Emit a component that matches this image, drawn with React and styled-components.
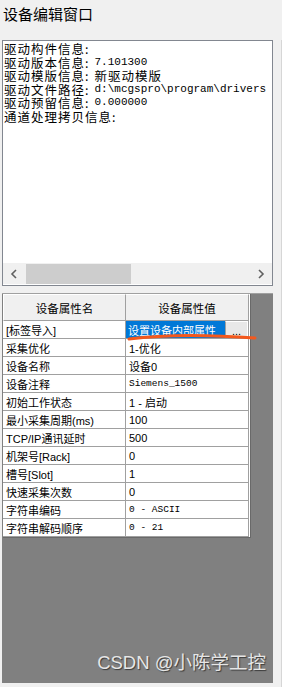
import React from "react";
import styled, { createGlobalStyle } from "styled-components";

// global
const GlobalStyle = createGlobalStyle`
  html, body {
    margin: 0;
    padding: 0;
    background: #f0f0f0;
  }
  body {
    font-family: "Noto Sans CJK SC", "Liberation Sans", sans-serif;
    color: #000;
  }
`;

const cjk = `"Noto Sans CJK SC", sans-serif`;
const mono = `"Liberation Mono", "Noto Sans CJK SC", monospace`;

// styles
const Window = styled.div`
  position: relative;
  display: flex;
  width: 282px;
  height: 687px;
  overflow: hidden;
`;

const Main = styled.div`
  display: flex;
  flex-direction: column;
  width: 274px;
  padding-left: 2px;
`;

const SideStrip = styled.div`
  flex: 1;
  margin-top: 40px;
  margin-left: 6px;
  border-left: 1px solid #d6d6d6;
`;

const Title = styled.div`
  height: 40px;
  flex-shrink: 0;
  padding: 5px 0 0 1px;
  box-sizing: border-box;
  font-size: 15px;
  line-height: 18px;
  font-family: ${cjk};
`;

const InfoBox = styled.div`
  display: flex;
  flex-direction: column;
  flex-shrink: 0;
  height: 246px;
  background: #fff;
  border: 1px solid #828790;
  box-sizing: border-box;
  width: 271px;
`;

const InfoText = styled.div`
  flex: 1;
  padding: 1px 0 0 1px;
  overflow-x: clip;
  overflow-y: visible;
  white-space: nowrap;
`;

const InfoLine = styled.div`
  height: 13.5px;
  display: flex;
  align-items: center;
`;

const InfoLabel = styled.span`
  display: inline-block;
  line-height: 13px;
  font-family: ${cjk};
  font-size: 12.5px;
  letter-spacing: 1px;
`;

const InfoValue = styled.span`
  display: inline-block;
  line-height: 13px;
  padding-left: 5px;
  font-family: ${(p) => (p.cjk ? cjk : mono)};
  font-size: ${(p) => (p.cjk ? "12.5px" : "11px")};
  letter-spacing: ${(p) => (p.cjk ? "1px" : "0")};
`;

const HScroll = styled.div`
  display: flex;
  align-items: center;
  height: 21px;
  background: #f0f0f0;
  margin-bottom: 1px;
`;

const ArrowBtn = styled.div`
  width: 22px;
  height: 21px;
  display: flex;
  align-items: center;
  justify-content: center;
`;

const Track = styled.div`
  flex: 1;
  height: 21px;
  display: flex;
  align-items: center;
`;

const Thumb = styled.div`
  width: 105px;
  height: 20px;
  margin-left: 1px;
  background: #cdcdcd;
`;

const GridArea = styled.div`
  margin-top: 7px;
  flex-shrink: 0;
  width: 271px;
  height: 390px;
  background: #808080;
  border-top: 1px solid #a0a0a0;
  box-sizing: border-box;
`;

const Table = styled.div`
  display: grid;
  grid-template-columns: 123px 123px;
  margin-left: 1px;
  width: 247px;
  background: #fff;
  border-right: 1px solid #696969;
  border-bottom: 1px solid #696969;
`;

const HeadCell = styled.div`
  height: 27px;
  display: flex;
  align-items: center;
  justify-content: center;
  background: #f0f0f0;
  border-right: 1px solid #a0a0a0;
  border-bottom: 1px solid #a0a0a0;
  border-left: ${(p) => (p.first ? "1px solid #fff" : "none")};
  border-top: 1px solid #fff;
  box-sizing: border-box;
  font-size: 11.5px;
  font-family: ${cjk};
`;

const Cell = styled.div`
  height: 18px;
  display: flex;
  align-items: center;
  padding-left: ${(p) => (p.selected ? "0" : "3px")};
  box-sizing: border-box;
  border-right: 1px solid #a0a0a0;
  border-bottom: 1px solid #a0a0a0;
  font-size: ${(p) => (p.mono ? "9.5px" : "11px")};
  font-family: ${(p) => (p.mono ? mono : `"Liberation Sans", ${cjk}`)};
  white-space: pre;
  overflow: hidden;
`;

const SelectedValue = styled.div`
  width: 99px;
  height: 17px;
  display: flex;
  align-items: center;
  padding-left: 2px;
  box-sizing: border-box;
  background: #0078d7;
  color: #fff;
  font-size: 11px;
  font-family: ${cjk};
  white-space: nowrap;
  overflow: hidden;
`;

const MoreBtn = styled.div`
  width: 22px;
  height: 17px;
  display: flex;
  align-items: flex-end;
  justify-content: center;
  background: #e8e8e8;
  border-left: 1px solid #a0a0a0;
  border-top: 1px solid #fff;
  font-size: 11px;
  line-height: 13px;
  font-family: "Liberation Sans", sans-serif;
  box-sizing: border-box;
`;

const Annotation = styled.svg`
  position: absolute;
  left: 0;
  top: 0;
  pointer-events: none;
`;

const Watermark = styled.div`
  position: absolute;
  right: 16px;
  bottom: 13px;
  color: #e6e6e6;
  font-size: 18.5px;
  font-family: "Liberation Sans", ${cjk};
  text-shadow: 1px 1px 1px #3a3a3a;
`;

const info = [
  { label: "驱动构件信息:" },
  { label: "驱动版本信息:", value: "7.101300" },
  { label: "驱动模版信息:", value: "新驱动模版", cjk: true },
  { label: "驱动文件路径:", value: "d:\\mcgspro\\program\\drivers" },
  { label: "驱动预留信息:", value: "0.000000" },
  { label: "通道处理拷贝信息:" },
];

const rows = [
  ["采集优化", "1-优化"],
  ["设备名称", "设备0"],
  ["设备注释", "Siemens_1500", true],
  ["初始工作状态", "1 - 启动"],
  ["最小采集周期(ms)", "100"],
  ["TCP/IP通讯延时", "500"],
  ["机架号[Rack]", "0"],
  ["槽号[Slot]", "1"],
  ["快速采集次数", "0"],
  ["字符串编码", "0 - ASCII", true],
  ["字符串解码顺序", "0 - 21", true],
];

function Chevron({ dir }) {
  return (
    <svg width="8" height="10" viewBox="0 0 8 10">
      <path
        d={dir === "left" ? "M6 1 L2 5 L6 9" : "M2 1 L6 5 L2 9"}
        fill="none"
        stroke="#606060"
        strokeWidth="1.6"
      />
    </svg>
  );
}

export default function App() {
  return (
    <>
      <GlobalStyle />
      <Window>
        <Main>
          <Title>设备编辑窗口</Title>
          <InfoBox>
            <InfoText>
              {info.map((l) => (
                <InfoLine key={l.label}>
                  <InfoLabel>{l.label}</InfoLabel>
                  {l.value && <InfoValue cjk={l.cjk}>{l.value}</InfoValue>}
                </InfoLine>
              ))}
            </InfoText>
            <HScroll>
              <ArrowBtn>
                <Chevron dir="left" />
              </ArrowBtn>
              <Track>
                <Thumb />
              </Track>
              <ArrowBtn>
                <Chevron dir="right" />
              </ArrowBtn>
            </HScroll>
          </InfoBox>
          <GridArea>
            <Table>
              <HeadCell first>设备属性名</HeadCell>
              <HeadCell>设备属性值</HeadCell>
              <Cell>[标签导入]</Cell>
              <Cell selected>
                <SelectedValue>设置设备内部属性</SelectedValue>
                <MoreBtn>...</MoreBtn>
              </Cell>
              {rows.map(([name, value, m]) => (
                <React.Fragment key={name}>
                  <Cell>{name}</Cell>
                  <Cell mono={m}>{value}</Cell>
                </React.Fragment>
              ))}
            </Table>
          </GridArea>
        </Main>
        <SideStrip />
        <Annotation width="282" height="687">
          <path
            d="M129 339 C160 335, 200 334, 255 338"
            fill="none"
            stroke="#f4581c"
            strokeWidth="3"
            strokeLinecap="round"
          />
        </Annotation>
        <Watermark>CSDN @小陈学工控</Watermark>
      </Window>
    </>
  );
}
